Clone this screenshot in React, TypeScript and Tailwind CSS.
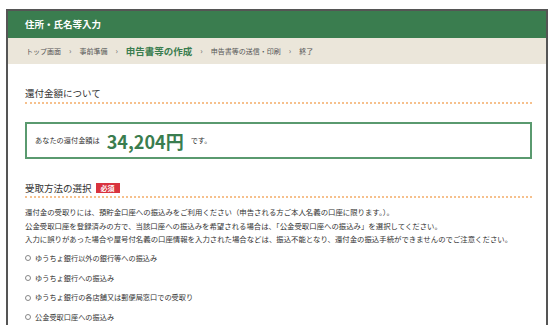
const font = { fontFamily: '"Noto Sans CJK JP", "Noto Sans", sans-serif' };

const crumbs = [
  { label: "トップ画面" },
  { label: "事前準備" },
  { label: "申告書等の作成", current: true },
  { label: "申告書等の送信・印刷" },
  { label: "終了" },
];

const options = [
  "ゆうちょ銀行以外の銀行等への振込み",
  "ゆうちょ銀行への振込み",
  "ゆうちょ銀行の各店舗又は郵便局窓口での受取り",
  "公金受取口座への振込み",
];

export default function App() {
  return (
    <main
      className="h-[325px] w-[554px] overflow-hidden bg-white pl-[6px] pt-[9px] text-[#333]"
      style={font}
    >
      <div className="h-[316px] w-[542px] border-2 border-b-0 border-[#555]">
        <header className="flex h-[27px] items-center bg-[#3a7d4f] px-[17px] text-[9.5px] font-bold text-white">
          住所・氏名等入力
        </header>

        <nav className="flex h-[26px] items-center gap-[8px] bg-[#ebe6da] pl-[18px] text-[7px] text-[#555]">
          {crumbs.map((c, i) => (
            <div key={c.label} className="flex items-center gap-[8px]">
              {i > 0 && <span className="text-[8px] leading-none text-[#666]">›</span>}
              <span
                className={
                  c.current
                    ? "text-[9.5px] font-bold text-[#3a7d4f]"
                    : ""
                }
              >
                {c.label}
              </span>
            </div>
          ))}
        </nav>

        <div className="pl-[17px] pr-[14px]">
          <h2 className="mt-[23px] border-b-2 border-dotted border-[#f6c08c] pb-[3px] text-[9.5px] font-normal leading-[12px]">
            還付金額について
          </h2>

          <div className="mt-[18px] flex h-[37px] items-center border-2 border-[#5a9a6f] pl-[8px]">
            <span className="text-[7.2px]">あなたの還付金額は</span>
            <span className="ml-[7px] text-[18px] font-bold leading-none text-[#3a7d4f]">
              34,204円
            </span>
            <span className="ml-[7px] text-[7.2px]">です。</span>
          </div>

          <h2 className="mt-[23px] flex items-center gap-[4px] border-b-2 border-dotted border-[#f6c08c] pb-[2px] text-[9.5px] font-normal leading-[12px]">
            受取方法の選択
            <span className="flex h-[10px] items-center bg-[#d9333f] px-[5px] text-[7px] font-bold leading-none text-white">
              必須
            </span>
          </h2>

          <div className="mt-[7px] text-[7.4px] leading-[13.5px]">
            <p>
              還付金の受取りには、預貯金口座への振込みをご利用ください（申告される方ご本人名義の口座に限ります。）。
            </p>
            <p>
              公金受取口座を登録済みの方で、当該口座への振込みを希望される場合は、「公金受取口座への振込み」を選択してください。
            </p>
            <p>
              入力に誤りがあった場合や屋号付名義の口座情報を入力された場合などは、振込不能となり、還付金の振込手続ができませんのでご注意ください。
            </p>
          </div>

          <div className="mt-[3px]">
            {options.map((o) => (
              <label key={o} className="flex h-[19.7px] items-center gap-[4px] text-[7.2px]">
                <span className="h-[6px] w-[6px] rounded-full border border-[#888]" />
                {o}
              </label>
            ))}
          </div>
        </div>
      </div>
    </main>
  );
}
